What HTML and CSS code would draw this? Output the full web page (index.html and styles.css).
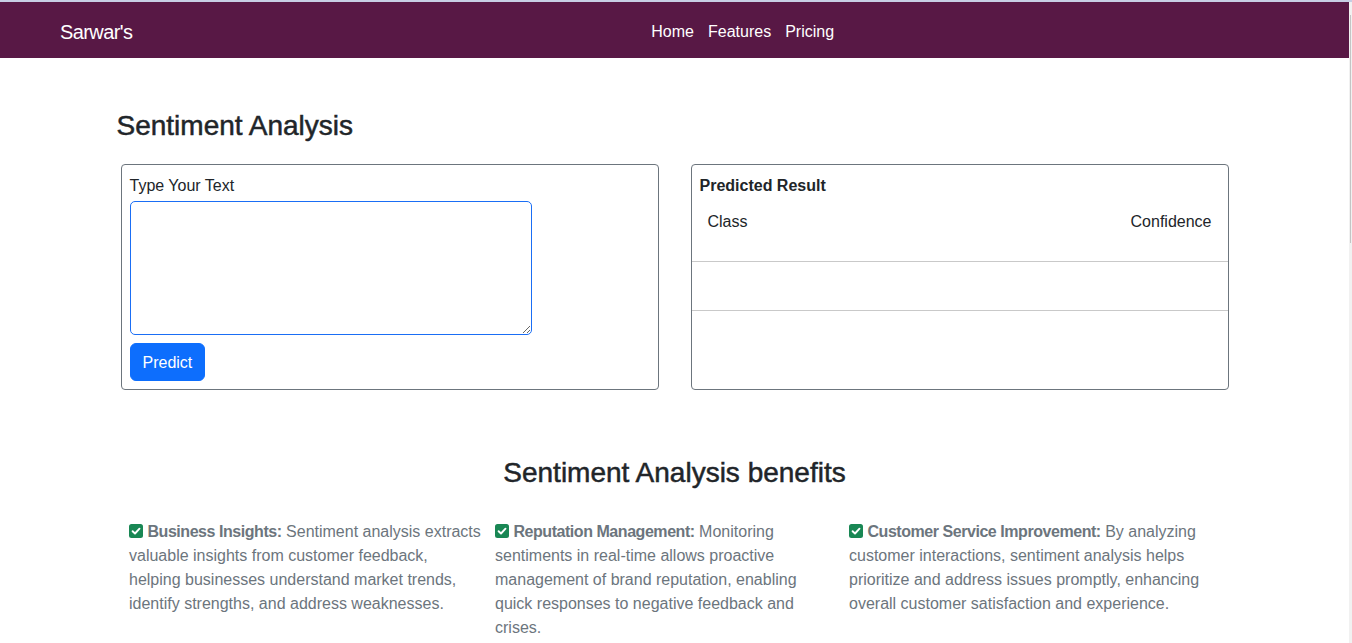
FILE: index.html
```html
<!DOCTYPE html>
<html lang="en">
<head>
<meta charset="utf-8">
<title>Sentiment Analysis</title>
<link rel="stylesheet" href="styles.css">
</head>
<body>
<div class="topline"></div>
<div class="frame">
  <div class="page">
    <nav class="navbar">
      <a class="brand" href="#">Sarwar's</a>
      <ul class="nav-links">
        <li><a href="#">Home</a></li>
        <li><a href="#">Features</a></li>
        <li><a href="#">Pricing</a></li>
      </ul>
    </nav>

    <main class="container">
      <h2 class="title">Sentiment Analysis</h2>

      <div class="cards">
        <div class="card input-card">
          <label class="field-label" for="text">Type Your Text</label>
          <textarea id="text" class="text-input"></textarea>
          <button class="btn-primary" type="button">Predict</button>
        </div>

        <div class="card result-card">
          <div class="result-title">Predicted Result</div>
          <table class="result-table">
            <thead>
              <tr><th class="col-class">Class</th><th class="col-conf">Confidence</th></tr>
            </thead>
            <tbody>
              <tr><td></td><td></td></tr>
            </tbody>
          </table>
        </div>
      </div>

      <section class="benefits">
        <h2 class="title benefits-title">Sentiment Analysis benefits</h2>
        <div class="benefit-grid">
          <p class="benefit b1"><svg class="check" viewBox="0 0 14 14" width="14" height="14"><rect width="14" height="14" rx="2.5" fill="#198754"/><path d="M3.6 7.2 L6 9.5 L10.5 4.7" fill="none" stroke="#fff" stroke-width="1.9" stroke-linecap="round" stroke-linejoin="round"/></svg> <strong>Business Insights:</strong><span> Sentiment analysis extracts valuable insights from customer feedback, helping businesses understand market trends, identify strengths, and address weaknesses.</span></p>
          <p class="benefit b2"><svg class="check" viewBox="0 0 14 14" width="14" height="14"><rect width="14" height="14" rx="2.5" fill="#198754"/><path d="M3.6 7.2 L6 9.5 L10.5 4.7" fill="none" stroke="#fff" stroke-width="1.9" stroke-linecap="round" stroke-linejoin="round"/></svg> <strong>Reputation Management:</strong><span> Monitoring sentiments in real-time allows proactive management of brand reputation, enabling quick responses to negative feedback and crises.</span></p>
          <p class="benefit b3"><svg class="check" viewBox="0 0 14 14" width="14" height="14"><rect width="14" height="14" rx="2.5" fill="#198754"/><path d="M3.6 7.2 L6 9.5 L10.5 4.7" fill="none" stroke="#fff" stroke-width="1.9" stroke-linecap="round" stroke-linejoin="round"/></svg> <strong>Customer Service Improvement:</strong><span> By analyzing customer interactions, sentiment analysis helps prioritize and address issues promptly, enhancing overall customer satisfaction and experience.</span></p>
        </div>
      </section>
    </main>
  </div>
  <div class="scrollbar"><div class="thumb"></div></div>
</div>
</body>
</html>
```

FILE: styles.css
```css
* { box-sizing: border-box; }

html, body {
  margin: 0;
  padding: 0;
  height: 643px;
  overflow: hidden;
  background: #fff;
}

body {
  font-family: "Liberation Sans", Arial, sans-serif;
  font-size: 16px;
  line-height: 24px;
  color: #212529;
}

.topline {
  height: 2px;
  background: #c7cde4;
}

.frame {
  display: flex;
  height: 641px;
}

.page {
  flex: 1;
  min-width: 0;
}

.scrollbar {
  width: 3px;
  background: #f1f1f1;
  padding-top: 13px;
  padding-left: 1px;
}

.thumb {
  width: 1px;
  height: 228px;
  background: #c4c4c4;
}

/* Navbar */
.navbar {
  height: 56px;
  background: #581845;
  display: flex;
  align-items: center;
  padding: 3px 12px 0;
}

.brand {
  color: #fff;
  text-decoration: none;
  font-size: 20px;
  line-height: 30px;
  letter-spacing: -0.6px;
  margin-left: 48px;
  margin-right: 16px;
}

.nav-links {
  flex: 1;
  display: flex;
  justify-content: center;
  list-style: none;
  margin: 0;
  padding: 0;
}

.nav-links a {
  display: block;
  color: #fff;
  text-decoration: none;
  padding: 0 7px;
  line-height: 24px;
}

/* Main */
.container {
  width: 1140px;
  margin: 0 auto;
  padding: 0 12px;
}

.title {
  font-size: 28px;
  line-height: 34px;
  font-weight: 400;
  -webkit-text-stroke: 0.5px #212529;
  margin: 51px 0 21px;
  color: #212529;
}

.cards {
  display: grid;
  grid-template-columns: 1fr 1fr;
  column-gap: 32px;
  padding: 0 4px;
}

.card {
  border: 1px solid #6c757d;
  border-radius: 4px;
  background: #fff;
}

.input-card {
  padding: 8px;
}

.field-label {
  display: block;
  padding-top: 1px;
  margin-bottom: 3px;
}

.text-input {
  display: block;
  width: 402px;
  height: 134px;
  border: 1px solid #1a6ef5;
  border-radius: 5px;
  margin: 0 0 8px;
  padding: 4px 6px;
  font: inherit;
  resize: both;
  outline: none;
}

.btn-primary {
  display: block;
  height: 38px;
  padding: 2px 12px 0;
  border: 1px solid #0d6efd;
  border-radius: 6px;
  background: #0d6efd;
  color: #fff;
  font: inherit;
  line-height: 24px;
  cursor: pointer;
}

.result-title {
  font-weight: 700;
  padding: 9px 8px 3px;
}

.result-table {
  width: 100%;
  border-collapse: collapse;
}

.result-table th {
  font-weight: 400;
  padding: 9px 16px 27px;
  border-bottom: 1px solid #c9c9c9;
}

.result-table .col-class { text-align: left; }
.result-table .col-conf { text-align: right; }

.result-table td {
  height: 49px;
  padding: 0;
  border-bottom: 1px solid #c9c9c9;
}

/* Benefits */
.benefits-title {
  text-align: center;
  margin: 66px 0 30px;
}

.benefit-grid {
  display: grid;
  grid-template-columns: 366px 354px 1fr;
  padding-left: 12.5px;
}

.benefit {
  margin: 0;
  color: #6c757d;
}

.benefit strong {
  font-weight: 700;
  letter-spacing: -0.45px;
}

.b1 { padding-right: 12px; }
.b2 { padding-right: 26px; }
.b3 { padding-right: 10px; }

.check {
  vertical-align: -1px;
  margin-right: 0;
}
```
